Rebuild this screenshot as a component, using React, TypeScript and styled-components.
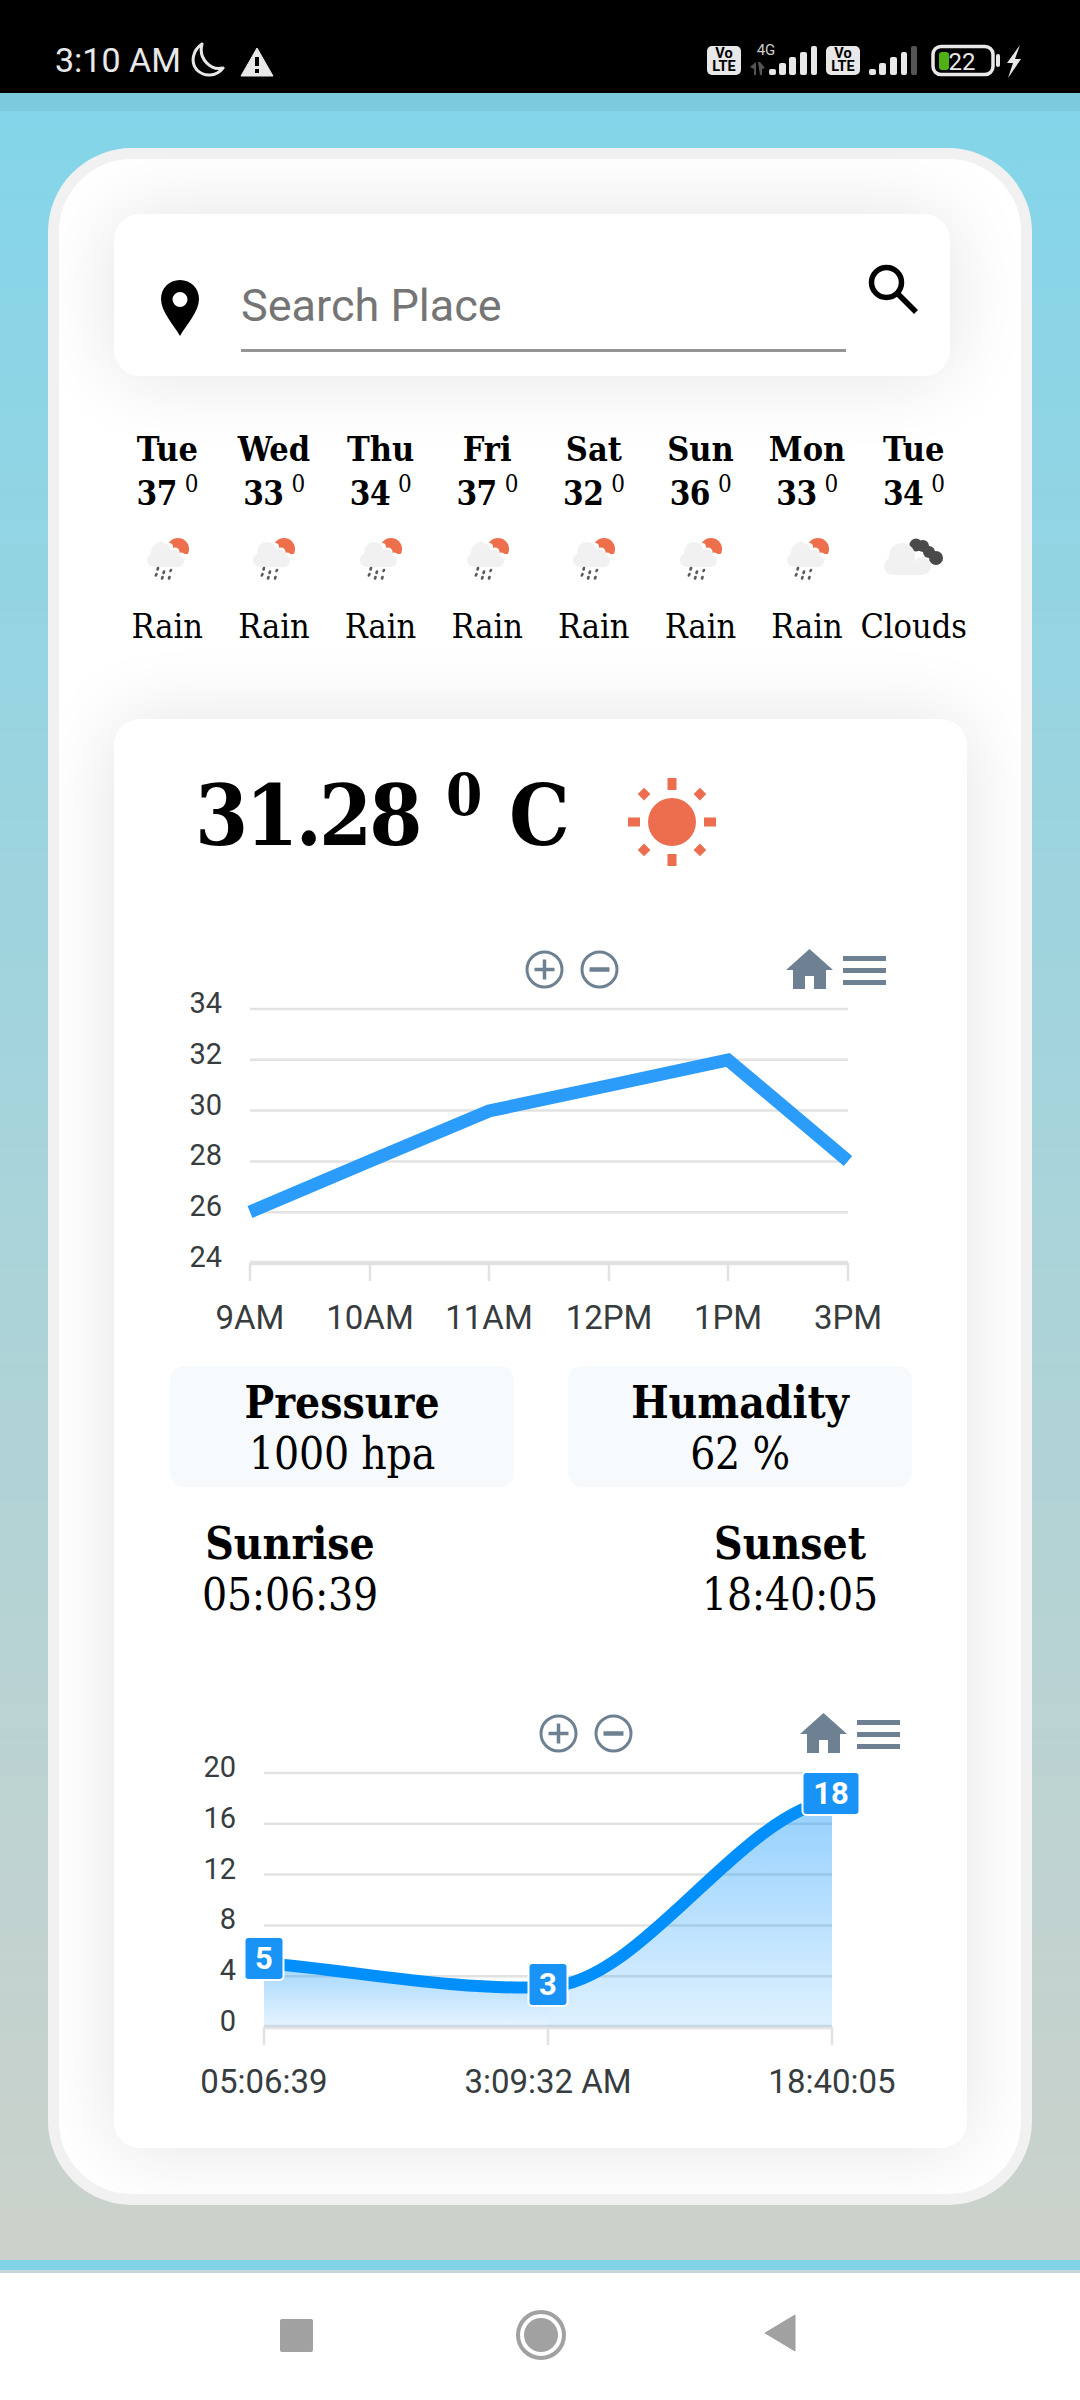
import React from 'react';
import styled, { createGlobalStyle } from 'styled-components';

const GlobalStyle = createGlobalStyle`
  html, body {
    margin: 0;
    padding: 0;
    background: #fff;
  }
  * {
    box-sizing: border-box;
  }
`;

const Phone = styled.div`
  width: 1080px;
  height: 2400px;
  display: flex;
  flex-direction: column;
  overflow: hidden;
  font-family: 'Roboto', sans-serif;
`;

/* ---------- status bar ---------- */

const StatusBar = styled.div`
  height: 93px;
  flex: none;
  background: #000;
  color: #e8e8e8;
  display: flex;
  align-items: center;
  padding: 27px 53px 0 55px;
  font-size: 34px;
`;

const StatusTime = styled.span`
  width: 134px;
`;

const WarnWrap = styled.div`
  margin-left: 15px;
  height: 30px;
`;

const StatusRight = styled.div`
  margin: 4px 0 0 auto;
`;

const StatusIcons = () => (
  <svg width="320" height="40" viewBox="0 0 320 40" style={{ display: 'block' }}>
    <g fill="#e8e8e8">
      <rect x="0" y="4" width="34" height="29" rx="5" />
      <rect x="119" y="4" width="34" height="29" rx="5" />
    </g>
    <g fontFamily="Roboto, sans-serif" fontWeight="700" fontSize="14.5" fill="#000" textAnchor="middle">
      <text x="17" y="16">Vo</text>
      <text x="17" y="29">LTE</text>
      <text x="136" y="16">Vo</text>
      <text x="136" y="29">LTE</text>
    </g>
    <text x="59" y="13" fontFamily="Roboto, sans-serif" fontSize="15" fill="#ccc" textAnchor="middle">4G</text>
    <g fill="#555">
      <path d="M43 25l6-5v13h-2v-6zM51 20h2l5 6-3 1v6h-2z" />
    </g>
    <g fill="#e8e8e8">
      <rect x="62" y="27" width="7" height="6" rx="2" />
      <rect x="72" y="21" width="7" height="12" rx="2" />
      <rect x="82" y="15" width="7" height="18" rx="2" />
      <rect x="93" y="10" width="7" height="23" rx="2" />
      <rect x="104" y="4" width="6" height="29" rx="2" />
      <rect x="162" y="27" width="7" height="6" rx="2" />
      <rect x="172" y="21" width="7" height="12" rx="2" />
      <rect x="183" y="15" width="7" height="18" rx="2" />
      <rect x="194" y="10" width="6" height="23" rx="2" />
    </g>
    <rect x="204" y="4" width="6" height="29" rx="2" fill="#555" />
    <rect x="226" y="4.500" width="60" height="28" rx="8" fill="none" stroke="#e8e8e8" strokeWidth="3.500" />
    <rect x="232" y="10" width="10" height="18" rx="3" fill="#4fb016" />
    <text x="255" y="28" fontFamily="Roboto, sans-serif" fontSize="24" fill="#e8e8e8" textAnchor="middle">22</text>
    <rect x="289" y="12" width="4" height="13" rx="2" fill="#e8e8e8" />
    <path d="M313 3l-13 18h6l-5 15 13-19h-6z" fill="#e8e8e8" />
  </svg>
);

/* ---------- page ---------- */

const Screen = styled.div`
  height: 2167px;
  flex: none;
  background: linear-gradient(180deg, #83d5e9 0%, #ccd2cb 100%);
  display: flex;
  flex-direction: column;
`;

const TopBand = styled.div`
  height: 18px;
  flex: none;
  background: #7bcbdd;
`;

const OuterCard = styled.div`
  margin: 37px 48px 0;
  height: 2057px;
  background: #fff;
  border: 11px solid #f1f1f1;
  border-radius: 84px;
  padding: 55px 54px 0 55px;
  overflow: hidden;
`;

const SearchCard = styled.div`
  width: 836px;
  height: 162px;
  background: #fff;
  border-radius: 26px;
  box-shadow: 0 0 80px rgba(0, 0, 0, 0.11);
  display: flex;
  align-items: flex-start;
  padding: 0 32px 0 47px;
`;

const PinWrap = styled.div`
  margin-top: 66px;
  width: 80px;
  flex: none;
`;

const SearchInput = styled.input`
  width: 605px;
  height: 138px;
  flex: none;
  padding: 48px 0 0 0;
  border: none;
  border-bottom: 3px solid #949494;
  background: transparent;
  outline: none;
  font-family: 'Roboto', sans-serif;
  font-size: 45px;
  color: #222;
  &::placeholder {
    color: #757575;
    opacity: 1;
  }
`;

const SearchButton = styled.div`
  margin: 50px 0 0 22px;
`;

const Forecast = styled.div`
  display: grid;
  grid-template-columns: repeat(8, 1fr);
  height: 343px;
  padding-top: 50px;
  font-family: 'DejaVu Serif Condensed', 'DejaVu Serif', serif;
  color: #000;
  text-align: center;
`;

const DayCol = styled.div`
  display: flex;
  flex-direction: column;
  align-items: center;
`;

const DayName = styled.div`
  font-size: 34px;
  font-weight: 700;
  line-height: 46px;
`;

const DayTemp = styled.div`
  font-size: 33px;
  font-weight: 700;
  line-height: 44px;
  letter-spacing: -0.5px;
  sup {
    font-size: 24px;
    font-weight: 400;
    line-height: 0;
    margin-left: 8px;
    vertical-align: 13px;
  }
`;

const DayIcon = styled.div`
  height: 60px;
  margin-top: 22px;
  svg {
    display: block;
  }
`;

const DayLabel = styled.div`
  font-size: 34px;
  line-height: 44px;
  margin-top: 6px;
  white-space: nowrap;
`;

const MainCard = styled.div`
  height: 1429px;
  width: 853px;
  background: #fff;
  border-radius: 26px;
  box-shadow: 0 0 80px rgba(0, 0, 0, 0.11);
  font-family: 'DejaVu Serif Condensed', 'DejaVu Serif', serif;
  color: #000;
`;

const CurrentRow = styled.div`
  height: 230px;
  padding: 46px 0 0 81px;
  display: flex;
  align-items: flex-start;
`;

const CurrentTemp = styled.div`
  font-size: 85px;
  font-weight: 700;
  line-height: 100px;
  letter-spacing: -3px;
  width: 432px;
  white-space: nowrap;
  sup {
    font-size: 58px;
    line-height: 0;
    letter-spacing: 0;
    margin: 0 3px;
    vertical-align: 30px;
  }
`;

const SunWrap = styled.div`
  margin-top: 12px;
`;

const ChartBox = styled.div<{ $shift: number; $top?: number }>`
  margin-left: ${(p) => p.$shift}px;
  margin-top: ${(p) => p.$top ?? 0}px;
  width: 760px;
`;

const ChartToolbar = styled.div`
  height: 40px;
  margin-bottom: -10px;
  display: flex;
  align-items: center;
  padding-left: 365px;
  color: #6e8192;
`;

const ToolGap = styled.div<{ $w: number }>`
  width: ${(p) => p.$w}px;
  flex: none;
`;

const ChartSvg = styled.svg`
  display: block;
  font-family: 'Roboto', sans-serif;
`;

const StatTiles = styled.div`
  display: flex;
  gap: 54px;
  margin: 26px 0 0 56px;
`;

const StatTile = styled.div`
  width: 344px;
  height: 121px;
  background: #f6fafd;
  border-radius: 14px;
  text-align: center;
  padding-top: 11px;
`;

const StatTitle = styled.div`
  font-size: 44px;
  font-weight: 700;
  line-height: 52px;
`;

const StatValue = styled.div`
  font-size: 44px;
  line-height: 50px;
  letter-spacing: -0.2px;
`;

const SunTimes = styled.div`
  display: grid;
  grid-template-columns: 250px 250px;
  column-gap: 250px;
  margin: 31px 0 0 51px;
  text-align: center;
`;

/* ---------- nav ---------- */

const BlueStrip = styled.div`
  height: 10px;
  flex: none;
  background: #81d4e8;
`;

const GreyLine = styled.div`
  height: 3px;
  flex: none;
  background: #c9d5da;
`;

const NavBar = styled.div`
  flex: 1;
  background: #fff;
  display: flex;
  align-items: center;
  padding: 0 0 3px 280px;
`;

const NavSquare = styled.div`
  width: 33px;
  height: 33px;
  border-radius: 2px;
  background: #a1a1a1;
`;

const NavHome = styled.div`
  width: 50px;
  height: 50px;
  margin-left: 203px;
  border-radius: 50%;
  border: 4px solid #a1a1a1;
  display: flex;
  align-items: center;
  justify-content: center;
  &::after {
    content: '';
    width: 34px;
    height: 34px;
    border-radius: 50%;
    background: #a1a1a1;
  }
`;

const NavBack = styled.div`
  margin-left: 198px;
`;

/* ---------- icons ---------- */

const PinIcon = () => (
  <svg width="38" height="56" viewBox="0 0 38 56">
    <path
      fillRule="evenodd"
      d="M19 0C8 0 0 8.500 0 19c0 13 13 26 19 37 6-11 19-24 19-37C38 8.500 30 0 19 0zm0 12a7.500 7.500 0 1 1 0 15 7.500 7.500 0 0 1 0-15z"
      fill="#000"
    />
  </svg>
);

const SearchIcon = () => (
  <svg width="50" height="50" viewBox="0 0 50 50" fill="none" stroke="#000" strokeWidth="5.500">
    <circle cx="18.500" cy="18.500" r="15" />
    <path d="M29 29l19 19" />
  </svg>
);

const RainIcon = () => (
  <svg width="43" height="44" viewBox="0 0 43 44">
    <circle cx="32" cy="11" r="11" fill="#ee6f4c" />
    <path d="M32 22h11v-2l-2 1z" fill="#ee6f4c" />
    <g fill="#fff">
      <circle cx="23" cy="9" r="4" />
      <circle cx="29" cy="14" r="4.500" />
      <circle cx="35" cy="19" r="4.500" />
      <rect x="20" y="16" width="23" height="10" />
    </g>
    <g fill="#f1f1f1">
      <circle cx="15" cy="14" r="10" />
      <circle cx="8" cy="22" r="7" />
      <circle cx="27" cy="19" r="7.500" />
      <circle cx="32" cy="23" r="6" />
      <rect x="8" y="20" width="24" height="9" />
    </g>
    <g stroke="#5a5a5a" strokeWidth="2.600" strokeLinecap="round">
      <path d="M12 30l-.5 1.500" />
      <path d="M18 33.500l-.5 1.500" />
      <path d="M25 32l-.5 1" />
      <path d="M10.500 36l-.7 1.500" />
      <path d="M16.500 39l-.5 1.500" />
      <path d="M23.500 39l-.5 1.500" />
    </g>
  </svg>
);

const CloudsIcon = () => (
  <svg width="60" height="38" viewBox="0 0 60 38">
    <g fill="#4a4a4a">
      <circle cx="32" cy="7" r="6.500" />
      <circle cx="39" cy="8" r="6" />
      <circle cx="45" cy="14" r="6" />
      <circle cx="52" cy="20" r="7" />
    </g>
    <g fill="#f1f1f1">
      <circle cx="18" cy="18" r="13" />
      <circle cx="9" cy="28" r="9" />
      <circle cx="38" cy="28" r="9" />
      <rect x="9" y="24" width="30" height="13" />
    </g>
  </svg>
);

const SunIcon = () => {
  const straight = [0, 90, 180, 270];
  const diagonal = [45, 135, 225, 315];
  return (
    <svg width="90" height="90" viewBox="-45 -45 90 90">
      <circle r="24" fill="#ec6e4e" />
      {straight.map((a) => (
        <rect key={a} x="-4.500" y="-44" width="9" height="12" fill="#ec6e4e" transform={`rotate(${a})`} />
      ))}
      {diagonal.map((a) => (
        <rect key={a} x="-4.500" y="-44" width="9" height="9" fill="#ec6e4e" transform={`rotate(${a})`} />
      ))}
    </svg>
  );
};

const ZoomIn = () => (
  <svg width="39" height="39" viewBox="0 0 39 39" fill="none" stroke="currentColor">
    <circle cx="19.500" cy="19.500" r="17.500" strokeWidth="3" />
    <path d="M19.500 9.500v20M9.500 19.500h20" strokeWidth="3.500" />
  </svg>
);

const ZoomOut = () => (
  <svg width="39" height="39" viewBox="0 0 39 39" fill="none" stroke="currentColor">
    <circle cx="19.500" cy="19.500" r="17.500" strokeWidth="3" />
    <path d="M9.500 19.500h20" strokeWidth="4.500" />
  </svg>
);

const HomeIcon = () => (
  <svg width="47" height="40" viewBox="0 0 47 40" fill="currentColor">
    <path d="M23.500 0L47 21h-7v19H28V27h-9v13H7V21H0z" />
  </svg>
);

const MenuIcon = () => (
  <svg width="43" height="33" viewBox="0 -3 43 33" fill="currentColor">
    <rect y="0" width="43" height="5" />
    <rect y="12" width="43" height="5" />
    <rect y="24" width="43" height="5" />
  </svg>
);

const Toolbar = () => (
  <ChartToolbar>
    <ZoomIn />
    <ToolGap $w={16} />
    <ZoomOut />
    <ToolGap $w={167} />
    <HomeIcon />
    <ToolGap $w={10} />
    <MenuIcon />
  </ChartToolbar>
);

/* ---------- charts ---------- */

const days = [
  { day: 'Tue', temp: 37, label: 'Rain' },
  { day: 'Wed', temp: 33, label: 'Rain' },
  { day: 'Thu', temp: 34, label: 'Rain' },
  { day: 'Fri', temp: 37, label: 'Rain' },
  { day: 'Sat', temp: 32, label: 'Rain' },
  { day: 'Sun', temp: 36, label: 'Rain' },
  { day: 'Mon', temp: 33, label: 'Rain' },
  { day: 'Tue', temp: 34, label: 'Clouds' },
];

const GRID = '#e2e2e2';
const LABEL = '#373d3f';

interface AxisProps {
  rows: string[];
  top: number;
  step: number;
  left: number;
  right: number;
  ticks: { x: number; label: string }[];
}

// y labels, grid lines, x axis and its ticks, shared by both charts
const Axis = ({ rows, top, step, left, right, ticks }: AxisProps) => {
  const bottom = top + step * (rows.length - 1);
  return (
    <g fill={LABEL}>
      {rows.map((r, i) => (
        <g key={r}>
          {i < rows.length - 1 && (
            <line x1={left} x2={right} y1={top + step * i} y2={top + step * i} stroke={GRID} strokeWidth="2.500" />
          )}
          <text x={left - 28} y={top + step * i + 4} textAnchor="end" fontSize="29">
            {r}
          </text>
        </g>
      ))}
      <line x1={left} x2={right} y1={bottom} y2={bottom} stroke={GRID} strokeWidth="4.500" />
      {ticks.map((t) => (
        <g key={t.label}>
          <line x1={t.x} x2={t.x} y1={bottom} y2={bottom + 18} stroke={GRID} strokeWidth="2.500" />
          <text x={t.x} y={bottom + 66} textAnchor="middle" fontSize="33">
            {t.label}
          </text>
        </g>
      ))}
    </g>
  );
};

const TempChart = () => (
  <ChartSvg width="760" height="361" viewBox="0 -10 760 361">
    <Axis
      rows={['34', '32', '30', '28', '26', '24']}
      top={20}
      step={50.8}
      left={90}
      right={688}
      ticks={[
        { x: 90, label: '9AM' },
        { x: 210, label: '10AM' },
        { x: 329, label: '11AM' },
        { x: 449, label: '12PM' },
        { x: 568, label: '1PM' },
        { x: 688, label: '3PM' },
      ]}
    />
    <path
      d="M90 223L210 172L329 122L449 96.500L568 71L688 172"
      fill="none"
      stroke="#2b9cf9"
      strokeWidth="13"
    />
  </ChartSvg>
);

const Marker = ({ x, y, w, label }: { x: number; y: number; w: number; label: string }) => (
  <g>
    <rect x={x - w / 2} y={y} width={w} height="43" rx="4" fill="#1a93f7" stroke="#fff" strokeWidth="2" />
    <text x={x} y={y + 32} textAnchor="middle" fontSize="31" fontWeight="700" fill="#fff">
      {label}
    </text>
  </g>
);

const SunChart = () => (
  <ChartSvg width="760" height="361" viewBox="0 -10 760 361">
    <defs>
      <linearGradient id="sunFill" gradientUnits="userSpaceOnUse" x1="0" y1="47" x2="0" y2="274">
        <stop offset="0" stopColor="#008ffb" stopOpacity="0.42" />
        <stop offset="1" stopColor="#008ffb" stopOpacity="0.13" />
      </linearGradient>
      <linearGradient id="sunFillLeft" gradientUnits="userSpaceOnUse" x1="0" y1="210" x2="0" y2="274">
        <stop offset="0" stopColor="#008ffb" stopOpacity="0.36" />
        <stop offset="1" stopColor="#008ffb" stopOpacity="0.1" />
      </linearGradient>
    </defs>
    <Axis
      rows={['20', '16', '12', '8', '4', '0']}
      top={20}
      step={50.8}
      left={90}
      right={658}
      ticks={[
        { x: 90, label: '05:06:39' },
        { x: 374, label: '3:09:32 AM' },
        { x: 658, label: '18:40:05' },
      ]}
    />
    <path d="M90 210C184 218 280 238 374 234L374 274H90Z" fill="url(#sunFillLeft)" />
    <path d="M374 234C468 230 564 62 658 47L658 274H374Z" fill="url(#sunFill)" />
    <path
      d="M90 210C184 218 280 238 374 234C468 230 564 62 658 47"
      fill="none"
      stroke="#008ffb"
      strokeWidth="12"
    />
    <Marker x={90} y={184} w={39} label="5" />
    <Marker x={374} y={210} w={39} label="3" />
    <Marker x={657} y={19} w={57} label="18" />
  </ChartSvg>
);

const App: React.FC = () => {
  return (
    <Phone>
      <GlobalStyle />
      <StatusBar>
        <StatusTime>3:10 AM</StatusTime>
        <svg width="36" height="36" viewBox="0 0 36 36" fill="none" stroke="#e8e8e8" strokeWidth="3">
          <path d="M13 2C4 8 1 20 8 28c7 7 19 7 26-2C22 29 9 17 13 2z" strokeLinejoin="round" />
        </svg>
        <WarnWrap>
          <svg width="34" height="30" viewBox="0 0 34 30">
            <path d="M17 1L33 29H1z" fill="#e8e8e8" stroke="#e8e8e8" strokeLinejoin="round" />
            <rect x="15" y="10" width="4" height="9" fill="#000" />
            <rect x="15" y="22" width="4" height="4" fill="#000" />
          </svg>
        </WarnWrap>
        <StatusRight>
          <StatusIcons />
        </StatusRight>
      </StatusBar>

      <Screen>
        <TopBand />
        <OuterCard>
          <SearchCard>
            <PinWrap>
              <PinIcon />
            </PinWrap>
            <SearchInput placeholder="Search Place" readOnly />
            <SearchButton>
              <SearchIcon />
            </SearchButton>
          </SearchCard>

          <Forecast>
            {days.map((d, i) => (
              <DayCol key={i}>
                <DayName>{d.day}</DayName>
                <DayTemp>
                  {d.temp}
                  <sup>0</sup>
                </DayTemp>
                <DayIcon>{d.label === 'Rain' ? <RainIcon /> : <CloudsIcon />}</DayIcon>
                <DayLabel>{d.label}</DayLabel>
              </DayCol>
            ))}
          </Forecast>

          <MainCard>
            <CurrentRow>
              <CurrentTemp>
                31.28 <sup>0</sup> C
              </CurrentTemp>
              <SunWrap>
                <SunIcon />
              </SunWrap>
            </CurrentRow>

            <ChartBox $shift={46}>
              <Toolbar />
              <TempChart />
            </ChartBox>

            <StatTiles>
              <StatTile>
                <StatTitle>Pressure</StatTitle>
                <StatValue>1000 hpa</StatValue>
              </StatTile>
              <StatTile>
                <StatTitle>Humadity</StatTitle>
                <StatValue>62 %</StatValue>
              </StatTile>
            </StatTiles>

            <SunTimes>
              <div>
                <StatTitle>Sunrise</StatTitle>
                <StatValue>05:06:39</StatValue>
              </div>
              <div>
                <StatTitle>Sunset</StatTitle>
                <StatValue>18:40:05</StatValue>
              </div>
            </SunTimes>

            <ChartBox $shift={60} $top={93}>
              <Toolbar />
              <SunChart />
            </ChartBox>
          </MainCard>
        </OuterCard>
      </Screen>

      <BlueStrip />
      <GreyLine />
      <NavBar>
        <NavSquare />
        <NavHome />
        <NavBack>
          <svg width="32" height="38" viewBox="0 0 32 38">
            <path d="M31 1v36L1 19z" fill="#a1a1a1" stroke="#a1a1a1" strokeLinejoin="round" />
          </svg>
        </NavBack>
      </NavBar>
    </Phone>
  );
};

export default App;
